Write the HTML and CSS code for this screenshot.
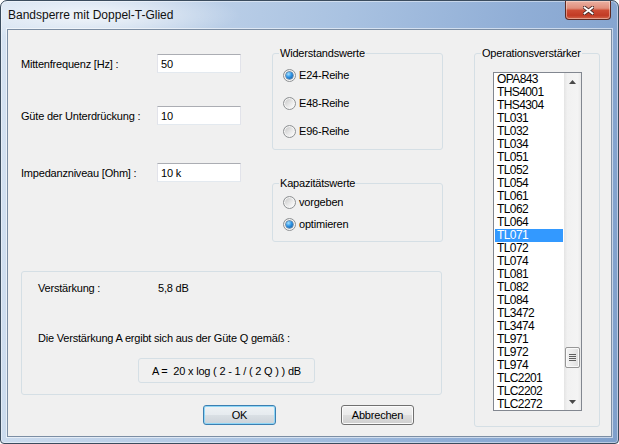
FILE: index.html
```html
<!DOCTYPE html>
<html lang="de">
<head>
<meta charset="utf-8">
<title>Bandsperre mit Doppel-T-Glied</title>
<link rel="stylesheet" href="styles.css">
</head>
<body>
<div class="window">
  <div class="titlebar">
    <span class="title">Bandsperre mit Doppel-T-Glied</span>
    <button class="close" aria-label="Schließen">
      <svg width="11" height="9" viewBox="0 0 11 9">
        <path d="M1.5 1.5 L9.5 7.5 M9.5 1.5 L1.5 7.5" stroke="#4b2b28" stroke-width="3.6" stroke-linecap="square" fill="none"/>
        <path d="M1.5 1.5 L9.5 7.5 M9.5 1.5 L1.5 7.5" stroke="#ffffff" stroke-width="1.8" stroke-linecap="square" fill="none"/>
      </svg>
    </button>
  </div>
  <div class="client">
    <div class="main">
      <div class="top">
        <div class="fields">
          <div class="field"><label>Mittenfrequenz [Hz] :</label><input class="edit" value="50"></div>
          <div class="field f2"><label>Güte der Unterdrückung :</label><input class="edit" value="10"></div>
          <div class="field f3"><label>Impedanzniveau [Ohm] :</label><input class="edit" value="10 k"></div>
        </div>
        <div class="groups">
          <div class="group res">
            <span class="legend">Widerstandswerte</span>
            <div class="options res-opts">
              <div class="opt"><span class="radio checked"></span><span>E24-Reihe</span></div>
              <div class="opt"><span class="radio"></span><span>E48-Reihe</span></div>
              <div class="opt"><span class="radio"></span><span>E96-Reihe</span></div>
            </div>
          </div>
          <div class="group cap">
            <span class="legend">Kapazitätswerte</span>
            <div class="options cap-opts">
              <div class="opt"><span class="radio"></span><span>vorgeben</span></div>
              <div class="opt"><span class="radio checked"></span><span>optimieren</span></div>
            </div>
          </div>
        </div>
      </div>
      <div class="group result">
        <div class="row"><span class="rlabel">Verstärkung :</span><span>5,8 dB</span></div>
        <div class="row note">Die Verstärkung A ergibt sich aus der Güte Q gemäß :</div>
        <div class="formula">A =  20 x log ( 2 - 1 / ( 2 Q ) ) dB</div>
      </div>
      <div class="buttons">
        <button class="btn default">OK</button>
        <button class="btn">Abbrechen</button>
      </div>
    </div>
    <div class="group opamp">
      <span class="legend">Operationsverstärker</span>
      <div class="listbox">
        <ul class="items">
          <li>OPA843</li>
          <li>THS4001</li>
          <li>THS4304</li>
          <li>TL031</li>
          <li>TL032</li>
          <li>TL034</li>
          <li>TL051</li>
          <li>TL052</li>
          <li>TL054</li>
          <li>TL061</li>
          <li>TL062</li>
          <li>TL064</li>
          <li class="selected">TL071</li>
          <li>TL072</li>
          <li>TL074</li>
          <li>TL081</li>
          <li>TL082</li>
          <li>TL084</li>
          <li>TL3472</li>
          <li>TL3474</li>
          <li>TL971</li>
          <li>TL972</li>
          <li>TL974</li>
          <li>TLC2201</li>
          <li>TLC2202</li>
          <li>TLC2272</li>
        </ul>
        <div class="scrollbar">
          <div class="arrow">
            <svg width="7" height="4" viewBox="0 0 7 4"><polygon points="0,4 7,4 3.5,0" fill="#4a4a4a"/></svg>
          </div>
          <div class="track">
            <div class="thumb"><span></span><span></span><span></span><span></span></div>
          </div>
          <div class="arrow">
            <svg width="7" height="4" viewBox="0 0 7 4"><polygon points="0,0 7,0 3.5,4" fill="#4a4a4a"/></svg>
          </div>
        </div>
      </div>
    </div>
  </div>
</div>
</body>
</html>
```
FILE: styles.css
```css
* { box-sizing: border-box; }
html, body { margin: 0; padding: 0; background: #ffffff; }
body {
  font-family: "Liberation Sans", Arial, sans-serif;
  font-size: 11px;
  color: #000;
  letter-spacing: -0.2px;
}

.window {
  width: 619px;
  height: 444px;
  border: 1px solid #3b4c5e;
  border-radius: 7px 7px 4px 4px;
  padding: 0 6px 6px 6px;
  display: flex;
  flex-direction: column;
  background:
    radial-gradient(ellipse 150px 26px at 90px 14px, rgba(255,255,255,0.75), rgba(255,255,255,0) 100%),
    linear-gradient(100deg, #d6e3f2 0%, #c2d4ea 22%, #a9c2e1 50%, #90aed6 75%, #7f9fcb 100%);
  box-shadow: inset 0 0 0 1px rgba(255,255,255,0.45);
}

.titlebar {
  height: 28px;
  display: flex;
  align-items: flex-start;
}
.title {
  margin: 7px 0 0 1px;
  font-size: 12px;
  line-height: 15px;
  letter-spacing: 0;
  color: #111;
}
.close {
  margin: 0 1px 0 auto;
  width: 46px;
  height: 19px;
  padding: 0;
  border: 1px solid #5e2a22;
  border-top: none;
  border-radius: 0 0 4px 4px;
  background: linear-gradient(#eab0a2 0%, #e08f7c 40%, #cd4b33 52%, #c23b25 80%, #d2654b 100%);
  box-shadow: inset 0 0 0 1px rgba(255,235,225,0.45);
  display: flex;
  align-items: center;
  justify-content: center;
}
.close svg { display: block; }

.client {
  height: 408px;
  border: 1px solid #7c8ea4;
  box-shadow: 0 0 0 1px rgba(255,255,255,0.55);
  background: #f0f0f0;
  padding: 23px 0 0 13px;
  display: flex;
  gap: 31px;
}

.main {
  width: 422px;
  display: flex;
  flex-direction: column;
}
.top {
  display: flex;
  gap: 31px;
}
.fields {
  width: 220px;
  margin-top: 1px;
  display: flex;
  flex-direction: column;
}
.field {
  display: flex;
  align-items: center;
  height: 19px;
}
.field.f2 { margin-top: 33px; }
.field.f3 { margin-top: 38px; }
.field label { width: 136px; }
.edit {
  width: 84px;
  height: 19px;
  border: 1px solid;
  border-color: #abadb3 #e2e3ea #e3e9ef #e2e3ea;
  padding: 0 0 0 3px;
  font: inherit;
  letter-spacing: inherit;
  color: #000;
  background: #fff;
  outline: none;
}

.groups {
  width: 171px;
  display: flex;
  flex-direction: column;
}
.group {
  border: 1px solid #d5dfe5;
  border-radius: 3px;
  display: flex;
  flex-direction: column;
}
.legend {
  align-self: flex-start;
  margin: -7px 0 0 6px;
  padding: 0 1px;
  line-height: 13px;
  background: #f0f0f0;
}
.res { height: 97px; }
.cap { height: 59px; margin-top: 33px; }
.options {
  display: flex;
  flex-direction: column;
  padding-left: 10px;
}
.res-opts { padding-top: 7px; gap: 12px; }
.cap-opts { padding-top: 4px; gap: 6px; }
.opt {
  display: flex;
  align-items: center;
  height: 16px;
  gap: 3px;
}
.radio {
  width: 13px;
  height: 13px;
  border-radius: 50%;
  border: 1px solid #8e9193;
  background: linear-gradient(135deg, #cdcdcd 15%, #e9e9e9 55%, #fafafa 85%);
  box-shadow: inset 0 0 0 1px #f6f6f6;
  display: flex;
  align-items: center;
  justify-content: center;
}
.radio.checked::after {
  content: "";
  width: 7px;
  height: 7px;
  border-radius: 50%;
  background: radial-gradient(circle at 35% 30%, #a6e2ff 0, #2d93e6 45%, #11508f 100%);
  box-shadow: 0 0 0 0.5px #1a4f80;
}

.result {
  margin-top: 29px;
  width: 421px;
  height: 124px;
  padding: 10px 0 0 16px;
}
.row {
  display: flex;
  line-height: 13px;
}
.rlabel { width: 120px; }
.note { margin-top: 37px; }
.formula {
  margin: 13px 0 0 100px;
  width: 177px;
  height: 25px;
  border: 1px solid #d5dfe5;
  border-radius: 3px;
  display: flex;
  align-items: center;
  justify-content: center;
  white-space: pre;
}

.buttons {
  margin-top: 10px;
  padding-left: 182px;
  display: flex;
  gap: 65px;
}
.btn {
  width: 73px;
  height: 20px;
  padding: 0;
  border: 1px solid #707070;
  border-radius: 3px;
  font: inherit;
  letter-spacing: inherit;
  color: #000;
  background: linear-gradient(#f2f2f2 0%, #ebebeb 48%, #dddddd 52%, #cfcfcf 100%);
  box-shadow: inset 0 0 0 1px #fbfbfb;
}
.btn.default {
  border-color: #3c7fb1;
  box-shadow: inset 0 0 0 1px #8fd6f6;
  background: linear-gradient(#eef2f5 0%, #e6ebef 48%, #d9dfe4 52%, #ccd3d9 100%);
}

.opamp {
  width: 126px;
  height: 374px;
}
.listbox {
  margin: 12px 0 0 18px;
  width: 89px;
  height: 339px;
  border: 1px solid #828790;
  background: #fff;
  display: flex;
}
.items {
  list-style: none;
  margin: 0;
  padding: 0 1px;
  width: 70px;
  font-size: 12px;
  letter-spacing: -0.6px;
}
.items li {
  height: 13px;
  line-height: 13px;
  padding-left: 2px;
  white-space: nowrap;
}
.items li.selected {
  background: #3399ff;
  color: #fff;
}
.scrollbar {
  width: 17px;
  display: flex;
  flex-direction: column;
  background: linear-gradient(to right, #e4e4e4 0%, #f1f1f1 20%, #f4f4f4 80%, #e9e9e9 100%);
}
.arrow {
  height: 17px;
  display: flex;
  align-items: center;
  justify-content: center;
}
.arrow svg { display: block; }
.track { flex: 1; }
.thumb {
  margin: 257px 0 0 1px;
  width: 15px;
  height: 21px;
  border: 1px solid #979797;
  border-radius: 2px;
  background: linear-gradient(to right, #f3f3f3 0%, #ebebeb 50%, #dedede 100%);
  box-shadow: inset 0 0 0 1px #fafafa;
  display: flex;
  flex-direction: column;
  align-items: center;
  justify-content: center;
  gap: 1px;
}
.thumb span {
  width: 7px;
  height: 1px;
  background: #5f5f5f;
}
```
